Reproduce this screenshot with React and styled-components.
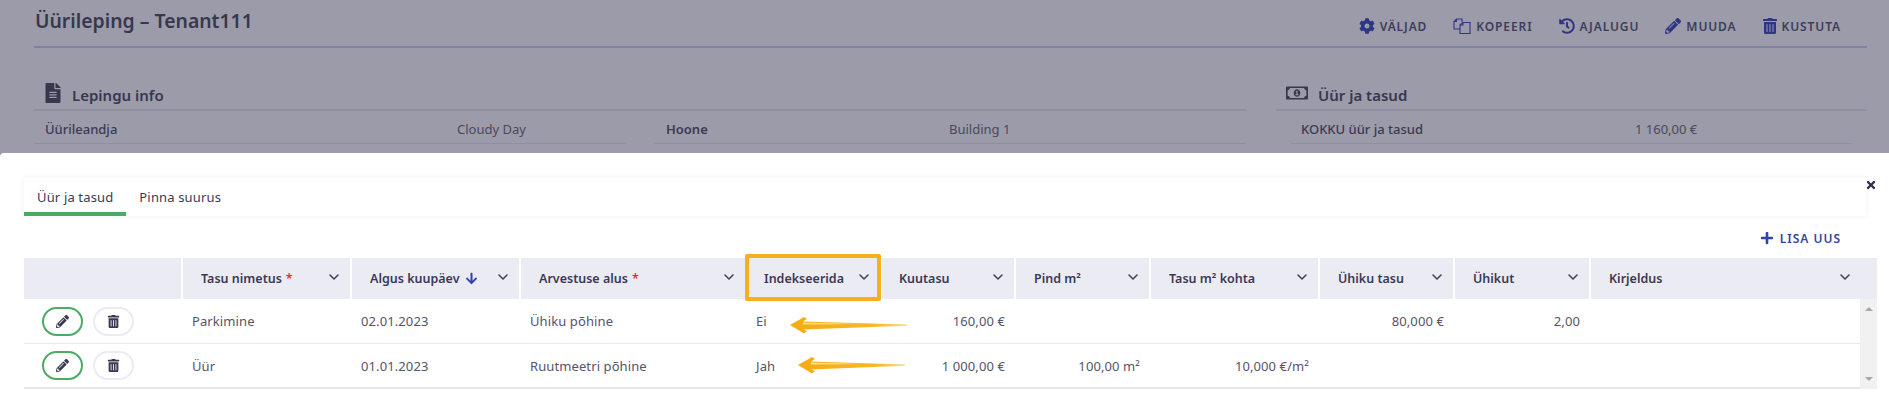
import React from "react";
import styled, { createGlobalStyle } from "styled-components";
import {
  FaCog,
  FaHistory,
  FaPencilAlt,
  FaTrashAlt,
  FaFileAlt,
  FaRegMoneyBillAlt,
  FaTimes,
  FaPlus,
  FaArrowDown,
} from "react-icons/fa";
import { FiChevronDown } from "react-icons/fi";

const COLUMNS = "157px 167px 167px 224px 133px 132px 133px 167px 133px 134px 1fr";

const GlobalStyle = createGlobalStyle`
  html, body {
    margin: 0;
    height: 100%;
    background: #fff;
    overflow: hidden;
  }
  body {
    font-family: "Noto Sans", "Open Sans", sans-serif;
    color: #3b3a55;
  }
`;

const Page = styled.div`
  height: 404px;
  background: #9c9ba9;
  overflow: hidden;
`;

const Backdrop = styled.div`
  height: 153px;
  box-sizing: border-box;
  padding: 0 22px 0 34px;
  overflow: hidden;
  color: #38374f;
`;

const TitleBar = styled.div`
  height: 46px;
  display: flex;
  justify-content: space-between;
  align-items: flex-start;
  border-bottom: 2px solid #7f82a3;
`;

const PageTitle = styled.h1`
  margin: 6px 0 0 1px;
  font-size: 19.4px;
  line-height: 30px;
  font-weight: 600;
  color: #38374f;
`;

const Actions = styled.div`
  display: flex;
  gap: 26px;
  margin: 18px 26px 0 0;
`;

const Action = styled.span`
  display: flex;
  align-items: center;
  gap: 5px;
  height: 16px;
  font-size: 12px;
  font-weight: 600;
  letter-spacing: 0.9px;
  color: #3c3d5c;

  svg {
    width: ${(p) => p.$iconWidth}px;
    height: 16px;
    color: #2f3585;
    flex: none;
  }
`;

const Sections = styled.div`
  display: grid;
  grid-template-columns: 1212px 591px;
  gap: 30px;
  margin-top: 33px;
`;

const SectionTitle = styled.h2`
  display: flex;
  align-items: center;
  gap: 10px;
  height: 28px;
  margin: 0;
  padding-left: 10px;
  border-bottom: 2px solid #8f8fa3;
  font-size: 15px;
  font-weight: 600;
  color: #38374f;

  svg {
    width: ${(p) => p.$iconWidth}px;
    height: 20px;
    margin-bottom: 4px;
  }
`;

const InfoGrid = styled.div`
  display: grid;
  grid-template-columns: ${(p) => p.$columns};
  column-gap: 30px;
  padding: ${(p) => p.$padding};
`;

const InfoRow = styled.div`
  display: grid;
  grid-template-columns: ${(p) => p.$label}px 1fr;
  height: 33px;
  box-sizing: border-box;
  padding-top: 3px;
  align-items: center;
  padding-left: ${(p) => p.$inset}px;
  border-bottom: 1px solid #8f8fa3;
  font-size: 13px;
  color: #4a4960;
`;

const InfoLabel = styled.span`
  font-weight: ${(p) => (p.$bold ? 600 : 500)};
  color: #3b3a55;
`;

const Modal = styled.div`
  height: 251px;
  background: #fff;
  border-radius: 4px 0 0 0;
  padding: 25px 12px 0 24px;
  position: relative;
`;

const TabBar = styled.div`
  display: flex;
  height: 38px;
  width: 1842px;
  box-shadow: 0 0 6px rgba(60, 60, 120, 0.07);
`;

const Tab = styled.div`
  height: 31px;
  padding: 3px 13px 0;
  display: flex;
  align-items: center;
  font-size: 13px;
  letter-spacing: 0.15px;
  color: #3b3a55;
  border-bottom: 4px solid ${(p) => (p.$active ? "#4caa62" : "transparent")};
`;

const CloseIcon = styled(FaTimes)`
  position: absolute;
  top: 26px;
  right: 12px;
  width: 12px;
  height: 12px;
  color: #2f2e4a;
`;

const Toolbar = styled.div`
  display: flex;
  justify-content: flex-end;
  padding: 2px 36px 0 0;
  height: 40px;
  align-items: center;
`;

const AddButton = styled.span`
  display: flex;
  align-items: center;
  gap: 6px;
  font-size: 12px;
  font-weight: 600;
  letter-spacing: 1px;
  color: #3343a8;

  svg {
    width: 14px;
    height: 14px;
  }
`;

const Table = styled.div`
  position: relative;
`;

const HeadRow = styled.div`
  display: grid;
  grid-template-columns: ${COLUMNS};
  column-gap: 2px;
  height: 41px;
`;

const HeadCell = styled.div`
  display: flex;
  align-items: center;
  justify-content: space-between;
  background: #ebebf3;
  padding: 0 ${(p) => p.$right}px 0 ${(p) => p.$left}px;
  font-size: 12.5px;
  font-weight: 600;
  color: #3b3a55;

  svg.chevron {
    width: 16px;
    height: 16px;
    stroke-width: 2.4;
    color: #45445f;
    margin-bottom: 3px;
    flex: none;
  }
`;

const HeadLabel = styled.span`
  display: flex;
  align-items: center;
  gap: 4px;
`;

const Required = styled.span`
  color: #e8321e;
`;

const SortIcon = styled(FaArrowDown)`
  width: 13px;
  height: 13px;
  color: #3343a8;
  margin-left: 1px;
`;

const Body = styled.div`
  display: flex;
`;

const Rows = styled.div`
  flex: 1;
  border-bottom: 2px solid #e5e6f2;
`;

const Row = styled.div`
  display: grid;
  grid-template-columns: ${COLUMNS};
  column-gap: 2px;
  height: 44px;
  align-items: center;
  font-size: 13px;
  letter-spacing: 0.1px;
  color: #55546a;

  & + & {
    border-top: 1px solid #e8e8f0;
    height: 43px;
  }
`;

const Cell = styled.div`
  padding: 0 9px;
  text-align: ${(p) => (p.$right ? "right" : "left")};
`;

const ButtonCell = styled.div`
  display: flex;
  gap: 10px;
  padding-left: 18px;
`;

const RoundButton = styled.span`
  width: 41px;
  height: 29px;
  box-sizing: border-box;
  display: flex;
  align-items: center;
  justify-content: center;
  border-radius: 15px;
  border: 2px solid ${(p) => (p.$green ? "#4caa62" : "#ebebf3")};
  color: #3b3a55;

  svg {
    width: 13px;
    height: 13px;
  }
`;

const Scrollbar = styled.div`
  width: 17px;
  background: #f1f1f1;
  display: flex;
  flex-direction: column;
  justify-content: space-between;
  align-items: center;
  padding: 8px 0;
  box-sizing: border-box;
`;

const ScrollArrow = styled.span`
  width: 0;
  height: 0;
  border-left: 4px solid transparent;
  border-right: 4px solid transparent;
  border-${(p) => (p.$up ? "bottom" : "top")}: 4px solid #a8a8a8;
`;

// orange annotations drawn on top of the screenshot
const Highlight = styled.div`
  position: absolute;
  left: 721px;
  top: -4px;
  width: 136px;
  height: 47px;
  box-sizing: border-box;
  border: 4px solid #f5b01f;
  border-radius: 2px;
`;

const ArrowSvg = styled.svg`
  position: absolute;
  left: ${(p) => p.$left}px;
  top: ${(p) => p.$top}px;
`;

const Arrow = ({ id, left, top, width }) => (
  <ArrowSvg $left={left} $top={top} width={width} height={18} viewBox={`0 0 ${width} 18`}>
    <defs>
      <linearGradient id={id} x1="0" x2="1" y1="0" y2="0">
        <stop offset="0" stopColor="#f5ab14" />
        <stop offset="0.7" stopColor="#f7b726" />
        <stop offset="1" stopColor="#fbd778" />
      </linearGradient>
    </defs>
    <path
      d={`M0 9 L14 1 L17 3 L13 5.5 L${width} 8.5 L${width} 9.8 L13 13.5 L17 15 L14 17.5 Z`}
      fill={`url(#${id})`}
    />
    <path d={`M13 6.5 L${width * 0.6} 8 L13 8.5 Z`} fill="#fde29a" />
  </ArrowSvg>
);

const CopyIcon = () => (
  <svg viewBox="0 0 18 16" fill="none" stroke="currentColor" strokeWidth="1.1">
    <path d="M7 11H1V3.5L3.5 1H9V4" />
    <path d="M3.5 1V3.5H1" />
    <path d="M7 7L10 4.5H17V15.5H7Z" />
    <path d="M10 4.5V7H7" />
  </svg>
);

const headers = [
  { label: "Tasu nimetus", required: true },
  { label: "Algus kuupäev", sorted: true },
  { label: "Arvestuse alus", required: true },
  { label: "Indekseerida", left: 17 },
  { label: "Kuutasu", left: 17 },
  { label: "Pind m²" },
  { label: "Tasu m² kohta" },
  { label: "Ühiku tasu" },
  { label: "Ühikut" },
  { label: "Kirjeldus", right: 24 },
];

const rows = [
  ["Parkimine", "02.01.2023", "Ühiku põhine", "Ei", "160,00 €", "", "", "80,000 €", "2,00", ""],
  ["Üür", "01.01.2023", "Ruutmeetri põhine", "Jah", "1 000,00 €", "100,00 m²", "10,000 €/m²", "", "", ""],
];

const actions = [
  { icon: <FaCog />, label: "VÄLJAD", width: 16 },
  { icon: <CopyIcon />, label: "KOPEERI", width: 18 },
  { icon: <FaHistory />, label: "AJALUGU", width: 16 },
  { icon: <FaPencilAlt />, label: "MUUDA", width: 16 },
  { icon: <FaTrashAlt />, label: "KUSTUTA", width: 14 },
];

export default function App() {
  return (
    <Page>
      <GlobalStyle />
      <Backdrop>
        <TitleBar>
          <PageTitle>Üürileping – Tenant111</PageTitle>
          <Actions>
            {actions.map((a) => (
              <Action key={a.label} $iconWidth={a.width}>
                {a.icon}
                {a.label}
              </Action>
            ))}
          </Actions>
        </TitleBar>
        <Sections>
          <div>
            <SectionTitle $iconWidth={18}>
              <FaFileAlt />
              Lepingu info
            </SectionTitle>
            <InfoGrid $columns="1fr 1fr" $padding="0">
              <InfoRow $label={412} $inset={11}>
                <InfoLabel>Üürileandja</InfoLabel>
                <span>Cloudy Day</span>
              </InfoRow>
              <InfoRow $label={283} $inset={11}>
                <InfoLabel $bold>Hoone</InfoLabel>
                <span>Building 1</span>
              </InfoRow>
              <InfoRow $label={412} $inset={11}>
                <InfoLabel>Ü</InfoLabel>
              </InfoRow>
            </InfoGrid>
          </div>
          <div>
            <SectionTitle $iconWidth={22}>
              <FaRegMoneyBillAlt />
              Üür ja tasud
            </SectionTitle>
            <InfoGrid $columns="1fr" $padding="0 15px">
              <InfoRow $label={334} $inset={10}>
                <InfoLabel>KOKKU üür ja tasud</InfoLabel>
                <span>1 160,00 €</span>
              </InfoRow>
            </InfoGrid>
          </div>
        </Sections>
      </Backdrop>
      <Modal>
        <TabBar>
          <Tab $active>Üür ja tasud</Tab>
          <Tab>Pinna suurus</Tab>
        </TabBar>
        <CloseIcon />
        <Toolbar>
          <AddButton>
            <FaPlus />
            LISA UUS
          </AddButton>
        </Toolbar>
        <Table>
          <HeadRow>
            <HeadCell />
            {headers.map((h) => (
              <HeadCell key={h.label} $left={h.left ?? 18} $right={h.right ?? 8}>
                <HeadLabel>
                  {h.label}
                  {h.required && <Required>*</Required>}
                  {h.sorted && <SortIcon />}
                </HeadLabel>
                <FiChevronDown className="chevron" />
              </HeadCell>
            ))}
          </HeadRow>
          <Body>
            <Rows>
              {rows.map((row) => (
                <Row key={row[0]}>
                  <ButtonCell>
                    <RoundButton $green>
                      <FaPencilAlt />
                    </RoundButton>
                    <RoundButton>
                      <FaTrashAlt />
                    </RoundButton>
                  </ButtonCell>
                  {row.map((value, i) => (
                    <Cell key={i} $right={i >= 4 && i < 9}>
                      {value}
                    </Cell>
                  ))}
                </Row>
              ))}
            </Rows>
            <Scrollbar>
              <ScrollArrow $up />
              <ScrollArrow />
            </Scrollbar>
          </Body>
          <Highlight />
          <Arrow id="arrow-a" left={766} top={58} width={117} />
          <Arrow id="arrow-b" left={774} top={98} width={107} />
        </Table>
      </Modal>
    </Page>
  );
}
